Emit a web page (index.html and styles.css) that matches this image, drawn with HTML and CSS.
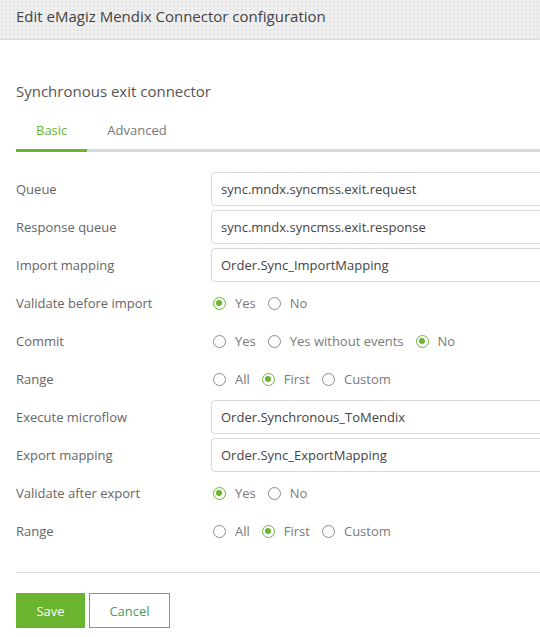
FILE: index.html
```html
<!DOCTYPE html>
<html>
<head>
<meta charset="utf-8">
<link rel="stylesheet" href="styles.css">
</head>
<body>
<div class="header"><h1 class="title">Edit eMagiz Mendix Connector configuration</h1></div>
<div class="content">
  <h2 class="subtitle">Synchronous exit connector</h2>
  <div class="tabs">
    <div class="tab active">Basic</div>
    <div class="tab">Advanced</div>
  </div>
  <div class="form">
    <div class="row"><div class="label">Queue</div><div class="field"><div class="input">sync.mndx.syncmss.exit.request</div></div></div>
    <div class="row"><div class="label">Response queue</div><div class="field"><div class="input">sync.mndx.syncmss.exit.response</div></div></div>
    <div class="row"><div class="label">Import mapping</div><div class="field"><div class="input">Order.Sync_ImportMapping</div></div></div>
    <div class="row"><div class="label">Validate before import</div><div class="field radios">
      <span class="opt"><span class="radio checked"></span>Yes</span>
      <span class="opt"><span class="radio"></span>No</span>
    </div></div>
    <div class="row"><div class="label">Commit</div><div class="field radios">
      <span class="opt"><span class="radio"></span>Yes</span>
      <span class="opt"><span class="radio"></span>Yes without events</span>
      <span class="opt"><span class="radio checked"></span>No</span>
    </div></div>
    <div class="row"><div class="label">Range</div><div class="field radios">
      <span class="opt"><span class="radio"></span>All</span>
      <span class="opt"><span class="radio checked"></span>First</span>
      <span class="opt"><span class="radio"></span>Custom</span>
    </div></div>
    <div class="row"><div class="label">Execute microflow</div><div class="field"><div class="input">Order.Synchronous_ToMendix</div></div></div>
    <div class="row"><div class="label">Export mapping</div><div class="field"><div class="input">Order.Sync_ExportMapping</div></div></div>
    <div class="row"><div class="label">Validate after export</div><div class="field radios">
      <span class="opt"><span class="radio checked"></span>Yes</span>
      <span class="opt"><span class="radio"></span>No</span>
    </div></div>
    <div class="row"><div class="label">Range</div><div class="field radios">
      <span class="opt"><span class="radio"></span>All</span>
      <span class="opt"><span class="radio checked"></span>First</span>
      <span class="opt"><span class="radio"></span>Custom</span>
    </div></div>
  </div>
  <div class="footer">
    <button class="btn btn-primary">Save</button>
    <button class="btn btn-default">Cancel</button>
  </div>
</div>
</body>
</html>
```
FILE: styles.css
```css
html, body {
  margin: 0;
  padding: 0;
  background: #fff;
  overflow: hidden;
}
body {
  font-family: "Open Sans", "Noto Sans", sans-serif;
  color: #555;
  width: 540px;
}
.header {
  height: 40px;
  box-sizing: border-box;
  border-bottom: 1px solid #dcdcdc;
  background-color: #efefef;
  background-image: radial-gradient(circle, #e3e3e3 0.7px, transparent 1px);
  background-size: 4px 4px;
  padding: 6px 16px 0;
}
.title {
  margin: 0;
  font-size: 15px;
  font-weight: normal;
  line-height: 20px;
  color: #444;
}
.content {
  padding-left: 16px;
}
.subtitle {
  margin: 40px 0 0;
  font-size: 15px;
  font-weight: normal;
  line-height: 22px;
  color: #555;
}
.tabs {
  display: flex;
  margin-top: 18px;
  border-bottom: 3px solid #dadada;
}
.tab {
  padding: 0 20px 9px;
  font-size: 13px;
  line-height: 20px;
  color: #777;
  margin-bottom: -3px;
  border-bottom: 3px solid transparent;
}
.tab.active {
  color: #6bb42f;
  border-bottom-color: #6bb42f;
}
.form {
  margin-top: 18px;
}
.row {
  display: flex;
  align-items: center;
  height: 38px;
}
.label {
  width: 195px;
  flex: none;
  font-size: 13px;
  color: #666;
}
.field {
  flex: 1;
  min-width: 0;
}
.input {
  box-sizing: border-box;
  height: 34px;
  border: 1px solid #dcdcdc;
  border-right: none;
  border-radius: 4px 0 0 4px;
  padding: 0 9px;
  font-size: 13px;
  line-height: 32px;
  color: #444;
  white-space: nowrap;
}
.radios {
  display: flex;
  align-items: center;
  padding-left: 2px;
  font-size: 13px;
  color: #7a7a7a;
}
.opt {
  display: flex;
  align-items: center;
  margin-right: 12px;
}
.radio {
  box-sizing: border-box;
  width: 13px;
  height: 13px;
  border-radius: 50%;
  border: 1px solid #8a8a8a;
  margin-right: 9px;
  position: relative;
}
.radio.checked {
  border: 1.5px solid #6bb42f;
}
.radio.checked::after {
  content: "";
  position: absolute;
  left: 2px;
  top: 2px;
  width: 6px;
  height: 6px;
  border-radius: 50%;
  background: #6bb42f;
}
.footer {
  margin-top: 22px;
  border-top: 1px solid #dcdcdc;
  padding-top: 20px;
  display: flex;
  gap: 4px;
}
.btn {
  font-family: inherit;
  font-size: 13px;
  height: 35px;
  box-sizing: border-box;
  border-radius: 0;
  cursor: pointer;
}
.btn-primary {
  width: 69px;
  background: #6bb42f;
  border: 1px solid #6bb42f;
  color: #fff;
}
.btn-default {
  width: 81px;
  background: #fff;
  border: 1px solid #6bb42f;
  color: #4a9a6a;
}
```
